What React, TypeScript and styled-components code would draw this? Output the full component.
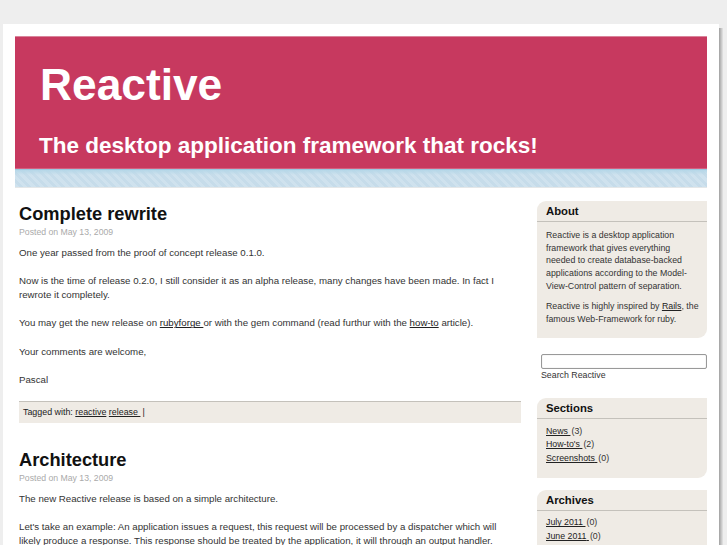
import React from 'react';
import styled, { createGlobalStyle } from 'styled-components';

const GlobalStyle = createGlobalStyle`
  html, body {
    margin: 0;
    height: 545px;
    overflow: hidden;
    background: #eeeeee;
    font-family: "Liberation Sans", Arial, sans-serif;
  }
`;

const Page = styled.div`
  box-sizing: border-box;
  width: 716px;
  height: 521px;
  margin: 24px 0 0 3px;
  padding: 12px 12px 0;
  background: #fff;
  box-shadow: 1px 4px 0 #a8a8a8, 2px 4px 0 #b8b8b8, 3px 4px 0 #cacaca, 4px 4px 0 #dcdcdc;
  overflow: hidden;
`;

const Banner = styled.header`
  box-sizing: border-box;
  height: 133px;
  padding: 23px 25px 0 24px;
  background: #c7395f;
  color: #fff;
  border-top: 1px solid #d9859b;
  border-bottom: 1px solid #d4607f;
`;

const SiteTitle = styled.h1`
  margin: 0 0 0 1px;
  font-size: 44.3px;
  line-height: 50px;
  font-weight: bold;
`;

const Tagline = styled.h2`
  margin: 23px 0 0;
  font-size: 22.5px;
  line-height: 26px;
  font-weight: bold;
`;

const Stripe = styled.div`
  height: 17px;
  border-top: 1px solid #9cc9e0;
  border-bottom: 1px solid #e4e7e8;
  background:
    linear-gradient(#b5d7e8, rgba(181, 215, 232, 0) 5px),
    repeating-linear-gradient(45deg, #cfe2ee 0 3px, #c6dcea 3px 6px);
`;

const Columns = styled.div`
  display: flex;
  justify-content: space-between;
  padding: 13px 0 0 4px;
`;

const Main = styled.main`
  width: 502px;
  padding-top: 1px;
`;

const Sidebar = styled.aside`
  width: 170px;
`;

const Post = styled.article`
  margin-bottom: 25px;
`;

const PostTitle = styled.h2`
  margin: 0;
  font-size: 18.25px;
  line-height: 24px;
  font-weight: bold;
  color: #111;
`;

const PostDate = styled.div`
  font-size: 8.7px;
  line-height: 12px;
  color: #aaa;
`;

const Paragraph = styled.p`
  margin: 0 0 14.1px;
  font-size: 9.7px;
  line-height: 14.1px;
  color: #333;
  &:first-of-type { margin-top: 8px; }
`;

const TextLink = styled.a`
  color: #222;
  text-decoration: underline;
`;

const TagBar = styled.div`
  height: 21px;
  line-height: 20px;
  padding: 0 4px;
  font-size: 8.9px;
  color: #222;
  background: #efebe5;
  border-top: 1px solid #c4c1bb;
`;

const TagSeparator = styled.span`
  margin-left: 2px;
`;

const Box = styled.section`
  margin-bottom: 12px;
  background: #efebe5;
  border-radius: 9px 0 9px 0;
`;

const BoxTitle = styled.h3`
  margin: 0;
  padding: 0 9px;
  height: 20px;
  line-height: 20px;
  font-size: 11.3px;
  font-weight: bold;
  color: #111;
  border-bottom: 1px solid #c4c1bb;
`;

const BoxBody = styled.div`
  padding: 7px 8px 13px 9px;
  font-size: 8.8px;
  line-height: 12.7px;
  color: #333;
`;

const BoxParagraph = styled.p`
  margin: 0 0 7.5px;
  &:last-child { margin: 0; }
`;

const LinkList = styled.ul`
  list-style: none;
  margin: -1.5px 0 -0.5px;
  padding: 0;
  line-height: 13.5px;
`;

const LinkCount = styled.span`
  margin-left: 1px;
`;

const SearchForm = styled.form`
  margin-bottom: 17px;
  padding-top: 4px;
`;

const SearchInput = styled.input`
  display: block;
  box-sizing: border-box;
  width: 166px;
  height: 15px;
  margin: 0 0 0 4px;
  padding: 0 2px;
  background: #fff;
  border: 1px solid #999;
  border-radius: 2px;
  box-shadow: inset 0 0 1px #bbb;
`;

const SearchLabel = styled.label`
  display: block;
  font-size: 8.8px;
  line-height: 12px;
  color: #333;
  padding-left: 4px;
`;

const sections = [['News', 3], ['How-to\'s', 2], ['Screenshots', 0]] as const;
const archives = [['July 2011', 0], ['June 2011', 0]] as const;

export default function App() {
  return (
    <>
      <GlobalStyle />
      <Page>
        <Banner>
          <SiteTitle>Reactive</SiteTitle>
          <Tagline>The desktop application framework that rocks!</Tagline>
        </Banner>
        <Stripe />
        <Columns>
          <Main>
            <Post>
              <PostTitle>Complete rewrite</PostTitle>
              <PostDate>Posted on May 13, 2009</PostDate>
              <Paragraph>One year passed from the proof of concept release 0.1.0.</Paragraph>
              <Paragraph>Now is the time of release 0.2.0, I still consider it as an alpha release, many changes have been made. In fact I rewrote it completely.</Paragraph>
              <Paragraph>You may get the new release on <TextLink href="#">rubyforge </TextLink>or with the gem command (read furthur with the <TextLink href="#">how-to</TextLink> article).</Paragraph>
              <Paragraph>Your comments are welcome,</Paragraph>
              <Paragraph>Pascal</Paragraph>
              <TagBar>Tagged with: <TextLink href="#">reactive</TextLink> <TextLink href="#">release </TextLink><TagSeparator>|</TagSeparator></TagBar>
            </Post>
            <Post>
              <PostTitle>Architecture</PostTitle>
              <PostDate>Posted on May 13, 2009</PostDate>
              <Paragraph>The new Reactive release is based on a simple architecture.</Paragraph>
              <Paragraph>Let's take an example: An application issues a request, this request will be processed by a dispatcher which will<br />likely produce a response. This response should be treated by the application, it will through an output handler.</Paragraph>
            </Post>
          </Main>
          <Sidebar>
            <Box>
              <BoxTitle>About</BoxTitle>
              <BoxBody>
                <BoxParagraph>Reactive is a desktop application framework that gives everything needed to create database-backed applications according to the Model-View-Control pattern of separation.</BoxParagraph>
                <BoxParagraph>Reactive is highly inspired by <TextLink href="#">Rails</TextLink>, the famous Web-Framework for ruby.</BoxParagraph>
              </BoxBody>
            </Box>
            <SearchForm>
              <SearchInput type="text" id="search" />
              <SearchLabel htmlFor="search">Search Reactive</SearchLabel>
            </SearchForm>
            <Box>
              <BoxTitle>Sections</BoxTitle>
              <BoxBody>
                <LinkList>
                  {sections.map(([name, count]) => (
                    <li key={name}><TextLink href="#">{name} </TextLink><LinkCount>({count})</LinkCount></li>
                  ))}
                </LinkList>
              </BoxBody>
            </Box>
            <Box>
              <BoxTitle>Archives</BoxTitle>
              <BoxBody>
                <LinkList>
                  {archives.map(([name, count]) => (
                    <li key={name}><TextLink href="#">{name} </TextLink><LinkCount>({count})</LinkCount></li>
                  ))}
                </LinkList>
              </BoxBody>
            </Box>
          </Sidebar>
        </Columns>
      </Page>
    </>
  );
}
